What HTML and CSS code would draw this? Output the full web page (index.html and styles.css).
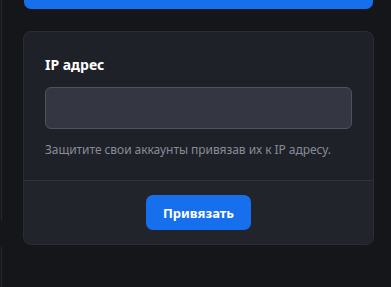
FILE: index.html
```html
<!DOCTYPE html>
<html lang="ru">
<head>
<meta charset="utf-8">
<link rel="stylesheet" href="styles.css">
</head>
<body>
<div class="layout">
  <div class="side">
    <div class="side-card side-card-top"></div>
    <div class="side-card side-card-bottom"></div>
  </div>
  <main class="main">
    <div class="blue-bar"></div>
    <section class="card">
      <div class="card-body">
        <label class="label" for="ip">IP адрес</label>
        <input class="input" id="ip" type="text">
        <p class="help">Защитите свои аккаунты привязав их к IP адресу.</p>
      </div>
      <div class="card-footer">
        <button class="btn" type="button">Привязать</button>
      </div>
    </section>
  </main>
</div>
</body>
</html>
```
FILE: styles.css
```css
html, body {
  margin: 0;
  padding: 0;
  background: #15161a;
  font-family: "Noto Sans", "Open Sans", sans-serif;
  width: 391px;
  height: 287px;
  overflow: hidden;
}
.layout {
  display: flex;
  height: 287px;
}
.side {
  width: 2px;
  display: flex;
  flex-direction: column;
  gap: 26px;
}
.side-card {
  border-right: 1px solid #25272e;
  background: #17181c;
}
.side-card-top {
  height: 221px;
  border-bottom-right-radius: 2px;
}
.side-card-bottom {
  flex: 1;
}
.main {
  margin-left: 21px;
  width: 351px;
  display: flex;
  flex-direction: column;
}
.blue-bar {
  height: 9px;
  margin: 0 1px;
  background: #1670ee;
  border-radius: 0 0 7px 7px;
}
.card {
  margin-top: 22px;
  background: #1f2129;
  border: 1px solid #2a2d35;
  border-radius: 8px;
  display: flex;
  flex-direction: column;
}
.card-body {
  padding: 23px 21px 0 21px;
  height: 125px;
  border-bottom: 1px solid #30333b;
  display: flex;
  flex-direction: column;
}
.label {
  color: #ffffff;
  font-weight: 700;
  font-size: 14px;
  line-height: 20px;
}
.input {
  margin-top: 12px;
  height: 42px;
  box-sizing: border-box;
  width: 307px;
  background: #343741;
  border: 1px solid #50535c;
  border-radius: 6px;
  outline: none;
}
.help {
  margin: 12px 0 0 0;
  color: #878c97;
  font-size: 12px;
  line-height: 18px;
  letter-spacing: -0.06px;
}
.card-footer {
  background: #22242c;
  border-radius: 0 0 8px 8px;
  padding: 14px 0 14px 0;
  display: flex;
  justify-content: center;
}
.btn {
  height: 35px;
  width: 105px;
  background: #1670ee;
  color: #ffffff;
  border: none;
  border-radius: 7px;
  font-family: "Noto Sans", "Open Sans", sans-serif;
  font-weight: 700;
  font-size: 13px;
  padding: 0;
}
```
